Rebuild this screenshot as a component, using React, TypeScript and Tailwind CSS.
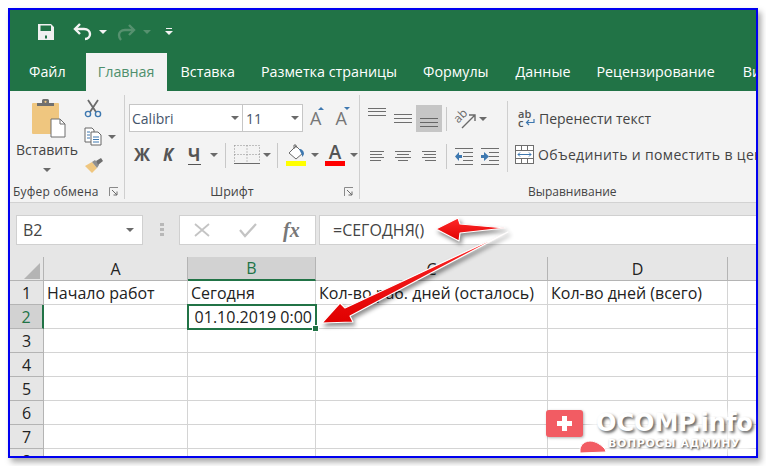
import React from 'react';

const font = { fontFamily: '"Open Sans", "Noto Sans", sans-serif' };

function Caret({ light, className = '' }: { light?: boolean; className?: string }) {
  return (
    <span
      className={`inline-block w-0 h-0 shrink-0 border-x-[4px] border-x-transparent border-t-[4px] ${
        light ? 'border-t-[#f3f3f3]' : 'border-t-[#6a6a6a]'
      } ${className}`}
    />
  );
}

function Launcher() {
  return (
    <svg width="10" height="10" viewBox="0 0 10 10" className="shrink-0">
      <path d="M0.5 9V0.5H9" fill="none" stroke="#8a8a8a" />
      <path d="M3 3l5 5M8 4.5V8H4.5" fill="none" stroke="#6a6a6a" />
    </svg>
  );
}

// horizontal text lines used by the alignment buttons
function Lines({ rows, color = '#6e6e6e' }: { rows: [number, number, number][]; color?: string }) {
  return (
    <svg width="26" height="27" viewBox="0 0 26 27" className="shrink-0">
      {rows.map(([x1, x2, y], i) => (
        <path key={i} d={`M${x1} ${y + 0.5}H${x2}`} stroke={color} />
      ))}
    </svg>
  );
}

function Divider({ h = 'h-[24px]' }: { h?: string }) {
  return <div className={`w-px bg-[#c8c8c8] shrink-0 ${h}`} />;
}

function Tab({ children, className = '' }: { children: React.ReactNode; className?: string }) {
  return <div className={`shrink-0 whitespace-nowrap text-white ${className}`}>{children}</div>;
}

function PasteIcon() {
  return (
    <svg width="36" height="40" viewBox="0 0 36 40" className="ml-[4px]">
      <rect x="1" y="5" width="27" height="31" rx="1" fill="#efc67f" />
      <path d="M6 5h5V2.5a1.5 1.5 0 0 1 1.5-1.5h4A1.5 1.5 0 0 1 18 2.5V5h5v3H6z" fill="#6f6f6f" />
      <circle cx="14.5" cy="3.8" r="1.1" fill="#efc67f" />
      <path d="M20 21h9l5 5v13H20z" fill="#fff" stroke="#6f6f6f" />
      <path d="M29 21v5h5" fill="none" stroke="#6f6f6f" />
    </svg>
  );
}

function ScissorsIcon() {
  return (
    <svg width="18" height="19" viewBox="0 0 18 19">
      <path d="M4 1l8 12M14 1L6 13" stroke="#6a6a6a" strokeWidth="1.8" fill="none" />
      <circle cx="4" cy="15" r="2.6" fill="none" stroke="#3e78b0" strokeWidth="1.4" />
      <circle cx="14" cy="15" r="2.6" fill="none" stroke="#3e78b0" strokeWidth="1.4" />
    </svg>
  );
}

function CopyIcon() {
  return (
    <svg width="18" height="19" viewBox="0 0 18 19">
      <path d="M1 1h7l2 2v12H1z" fill="#fff" stroke="#666" />
      <path d="M7 5h7l3 3v10H7z" fill="#fff" stroke="#666" />
      <path d="M3 5h3M3 8h3M3 11h3M9 10h6M9 12.5h6M9 15h6" stroke="#3e78b0" />
    </svg>
  );
}

function BrushIcon() {
  return (
    <svg width="20" height="17" viewBox="0 0 20 17">
      <path d="M1 9l7-4 5 6-5 5z" fill="#efc67f" />
      <path d="M8 5l3-2 4 5-2 3z" fill="#8f8f8f" />
      <path d="M12 4l5-3 2 3-5 4z" fill="#6f6f6f" />
    </svg>
  );
}

function BordersIcon() {
  return (
    <svg width="26" height="20" viewBox="0 0 26 20">
      <path
        d="M0.500 0.500H25.500V17.500M0.500 0.500V17.500M0.500 9.500H25.500M13 0.500V17.500"
        stroke="#8a8a8a"
        strokeDasharray="1 2"
        fill="none"
      />
      <path d="M0 18.500H26" stroke="#6a6a6a" />
    </svg>
  );
}

function FillIcon() {
  return (
    <svg width="20" height="22" viewBox="0 0 20 22">
      <path d="M10 2l7 7-7 6-7-6z" fill="#fff" stroke="#6a6a6a" />
      <path d="M8 5V1h2v3" fill="none" stroke="#6a6a6a" />
      <path d="M13 5c3 0 5 2 5 5l-1.500 3-1-3z" fill="#3e78b0" />
      <rect x="0" y="17" width="20" height="5" fill="#ffff00" />
    </svg>
  );
}

function OrientIcon() {
  return (
    <svg width="24" height="24" viewBox="0 0 24 24">
      <path d="M8 21L21 8M15 8h6v6" fill="none" stroke="#6a6a6a" strokeWidth="1.4" />
      <text
        x="1"
        y="13"
        fontSize="12"
        fill="#6a6a6a"
        fontFamily="Open Sans"
        transform="rotate(-45 7 11)"
      >
        ab
      </text>
    </svg>
  );
}

function IndentIcon({ flip }: { flip?: boolean }) {
  return (
    <svg width="18" height="17" viewBox="0 0 18 17">
      <path d="M0 0.500H18M0 16.500H18M8 4.500H18M8 8.500H18M8 12.500H18" stroke="#6e6e6e" />
      {flip ? (
        <path d="M0 7h3V4l5 4.500L3 13v-3H0z" fill="#3e78b0" />
      ) : (
        <path d="M7 7H4V4L0 8.500 4 13v-3h3z" fill="#3e78b0" />
      )}
    </svg>
  );
}

function WrapIcon() {
  return (
    <span className="relative w-[17px] h-[18px] shrink-0 text-[11px] leading-[9px] text-[#555] font-semibold">
      <span className="block">ab</span>
      <span className="block">c</span>
      <svg width="10" height="8" viewBox="0 0 10 8" className="absolute right-0 bottom-0">
        <path d="M9 0v3.500H2M4 1L1.500 3.500 4 6" fill="none" stroke="#3e78b0" strokeWidth="1.200" />
      </svg>
    </span>
  );
}

function MergeIcon() {
  return (
    <svg width="19" height="19" viewBox="0 0 19 19" className="shrink-0">
      <rect x="0.500" y="0.500" width="18" height="18" fill="#fff" stroke="#6e6e6e" />
      <path d="M0 5.500H19M0 13.500H19M6.500 0V5M12.500 0V5M6.500 14V19M12.500 14V19" stroke="#6e6e6e" />
      <path d="M3 9.500H16M5 7.500l-2 2 2 2M14 7.500l2 2-2 2" fill="none" stroke="#3e78b0" />
    </svg>
  );
}

const rowLabels = ['1', '2', '3', '4', '5', '6', '7', '8'];

export default function App() {
  return (
    <div className="relative w-[766px] h-[466px] bg-white overflow-hidden pl-2 pt-2" style={font}>
      <div className="w-[750px] h-[450px] border-2 border-[#0000f0] overflow-hidden bg-white shadow-[3px_4px_6px_rgba(0,0,0,0.35)]">
        {/* title bar */}
        <div className="h-[43px] bg-[#217346] flex items-center pl-[28px]">
          <svg width="16" height="16" viewBox="0 0 16 16">
            <path
              d="M0 0h13l3 3v13H0zM2.500 1.500v5.500h10.500V1.500zM7 11.500v3h2v-3z"
              fill="#f0f0f0"
              fillRule="evenodd"
            />
          </svg>
          <svg width="20" height="18" viewBox="0 0 20 18" className="ml-[19px]">
            <path d="M7 1L2 6l5 5" fill="none" stroke="#f4f4f4" strokeWidth="2.400" />
            <path d="M2 6h9c4 0 6 2.500 6 5s-2 5-5 5" fill="none" stroke="#f4f4f4" strokeWidth="2.400" />
          </svg>
          <Caret light className="ml-[6px]" />
          <svg width="20" height="18" viewBox="0 0 20 18" className="ml-[9px]">
            <path d="M13 2l5 5-5 5" fill="none" stroke="#56916f" strokeWidth="2.400" />
            <path d="M18 7H9c-4 0-6 2.500-6 5s1 4 2 5" fill="none" stroke="#56916f" strokeWidth="2.400" />
          </svg>
          <span className="ml-[7px] w-0 h-0 border-x-[4px] border-x-transparent border-t-[4px] border-t-[#56916f]" />
          <span className="ml-[14px] flex flex-col items-center gap-[2px]">
            <span className="w-[6px] h-px bg-[#f4f4f4]" />
            <Caret light />
          </span>
        </div>

        {/* tabs */}
        <div className="h-[38px] bg-[#217346] flex items-end text-[14.300px] leading-[38px] overflow-hidden">
          <Tab className="ml-[19px]">Файл</Tab>
          <div className="shrink-0 ml-[20px] w-[81px] h-[38px] bg-[#f3f3f3] text-center text-[#4e8f6c]">Главная</div>
          <Tab className="ml-[14px]">Вставка</Tab>
          <Tab className="ml-[26px]">Разметка страницы</Tab>
          <Tab className="ml-[26px]">Формулы</Tab>
          <Tab className="ml-[27px]">Данные</Tab>
          <Tab className="ml-[26px]">Рецензирование</Tab>
          <Tab className="ml-[28px]">Вид</Tab>
        </div>

        {/* ribbon */}
        <div className="h-[112px] bg-[#f3f3f3] border-b border-[#d2d2d2] flex text-[#444] text-[12px]">
          {/* clipboard */}
          <div className="w-[114px] shrink-0 flex flex-col">
            <div className="h-[91px] flex">
              <div className="w-[74px] pl-[6px] flex flex-col">
                <div className="w-[62px] pt-[7px] flex flex-col items-center">
                  <PasteIcon />
                  <div className="mt-[2px] text-[14px] leading-[20px] text-[#444]">Вставить</div>
                  <Caret className="mt-[8px]" />
                </div>
              </div>
              <div className="pt-[8px] flex flex-col">
                <ScissorsIcon />
                <div className="mt-[9px] flex items-center gap-[6px]">
                  <CopyIcon />
                  <Caret />
                </div>
                <div className="mt-[11px]">
                  <BrushIcon />
                </div>
              </div>
            </div>
            <div className="flex-1 pl-[3px] pr-[5px] flex items-center justify-between">
              <span className="text-[#444] tracking-[0.2px]">Буфер обмена</span>
              <Launcher />
            </div>
          </div>
          <div className="w-px h-[104px] mt-[4px] bg-[#cfcfcf] shrink-0" />

          {/* font */}
          <div className="w-[234px] shrink-0 flex flex-col">
            <div className="h-[91px] pl-[4px] flex flex-col">
              <div className="mt-[13px] flex items-center">
                <div className="w-[114px] h-[28px] bg-white border border-[#c6c6c6] flex items-center justify-between pl-[2px] pr-[3px]">
                  <span className="text-[14px] text-[#44546a]">Calibri</span>
                  <Caret />
                </div>
                <div className="w-[60px] h-[28px] bg-white border border-l-0 border-[#c6c6c6] flex items-center justify-between pl-[3px] pr-[3px]">
                  <span className="text-[14px] text-[#44546a]">11</span>
                  <Caret />
                </div>
                <div className="ml-[7px] relative text-[18px] leading-[20px] font-medium text-[#777]">
                  A
                  <span className="absolute right-[-3px] top-[-1px] w-0 h-0 border-x-[3px] border-x-transparent border-b-[3px] border-b-[#3e78b0]" />
                </div>
                <div className="ml-[14px] relative text-[18px] leading-[20px] font-medium text-[#777]">
                  A
                  <span className="absolute right-[-3px] top-[-1px] w-0 h-0 border-x-[3px] border-x-transparent border-t-[3px] border-t-[#3e78b0]" />
                </div>
              </div>
              <div className="mt-[10px] h-[26px] flex items-center">
                <span className="ml-[5px] w-[16px] text-[17px] font-bold text-[#555]">Ж</span>
                <span className="ml-[13px] w-[11px] text-[17px] font-bold italic text-[#555]">К</span>
                <span className="ml-[14px] w-[13px] text-[17px] leading-[19px] font-bold text-[#555] border-b border-[#555]">Ч</span>
                <Caret className="ml-[9px]" />
                <Divider h="h-[25px] ml-[7px]" />
                <span className="ml-[8px]">
                  <BordersIcon />
                </span>
                <Caret className="ml-[3px]" />
                <Divider h="h-[25px] ml-[6px]" />
                <span className="ml-[8px]">
                  <FillIcon />
                </span>
                <Caret className="ml-[5px]" />
                <span className="ml-[6px] w-[20px] flex flex-col items-center">
                  <span className="text-[19px] leading-[17px] font-semibold text-[#555]">A</span>
                  <span className="w-[20px] h-[5px] bg-[#ff0000]" />
                </span>
                <Caret className="ml-[5px]" />
              </div>
            </div>
            <div className="flex-1 relative flex items-center justify-center pr-[20px]">
              <span className="text-[#444] text-[12.500px]">Шрифт</span>
              <span className="absolute right-[5px] top-[5px]">
                <Launcher />
              </span>
            </div>
          </div>
          <div className="w-px h-[104px] mt-[4px] bg-[#cfcfcf] shrink-0" />

          {/* alignment */}
          <div className="flex-1 min-w-0 flex flex-col">
            <div className="h-[91px] flex">
              <div className="w-[147px] shrink-0 pl-[4px] pt-[14px]">
                <div className="h-[27px] flex items-center">
                  <Lines rows={[[4, 22, 3], [4, 22, 6], [4, 22, 10]]} />
                  <Lines rows={[[4, 22, 9], [4, 22, 13], [4, 22, 17]]} />
                  <div className="w-[26px] h-[27px] bg-[#c6c6c6]">
                    <Lines rows={[[4, 22, 13], [4, 22, 17], [4, 22, 21]]} color="#666" />
                  </div>
                  <Divider h="h-[24px] ml-[4px]" />
                  <span className="ml-[7px]">
                    <OrientIcon />
                  </span>
                  <Caret className="ml-[1px]" />
                </div>
                <div className="mt-[11px] h-[27px] flex items-center">
                  <Lines rows={[[6, 20, 8], [6, 18, 11], [6, 20, 14], [6, 17, 17]]} />
                  <Lines rows={[[5, 21, 8], [7, 19, 11], [5, 21, 14], [8, 18, 17]]} />
                  <Lines rows={[[6, 20, 8], [8, 20, 11], [6, 20, 14], [9, 20, 17]]} />
                  <Divider h="h-[25px] ml-[4px]" />
                  <span className="ml-[8px]">
                    <IndentIcon />
                  </span>
                  <span className="ml-[8px]">
                    <IndentIcon flip />
                  </span>
                </div>
              </div>
              <div className="w-px h-[71px] mt-[10px] bg-[#cfcfcf] shrink-0" />
              <div className="flex-1 min-w-0 pl-[7px] overflow-hidden">
                <div className="mt-[16px] h-[22px] ml-[3px] flex items-center gap-[4px] whitespace-nowrap text-[14px] text-[#444]">
                  <WrapIcon />
                  Перенести текст
                </div>
                <div className="mt-[15px] h-[20px] flex items-center gap-[4px] whitespace-nowrap text-[14px] tracking-[0.35px] text-[#444]">
                  <MergeIcon />
                  Объединить и поместить в центре
                </div>
              </div>
            </div>
            <div className="flex-1 pl-[168px] flex items-center text-[12px] text-[#444]">Выравнивание</div>
          </div>
        </div>

        {/* formula bar */}
        <div className="h-[54px] bg-[#e6e6e6] pt-[12px] flex items-start">
          <div className="ml-[6px] w-[127px] h-[30px] bg-white border border-[#d0d0d0] flex items-center justify-between pl-[6px] pr-[8px] text-[16px] text-[#444]">
            B2
            <Caret />
          </div>
          <div className="ml-[17px] w-[4px] h-[14px] mt-[8px] flex flex-col gap-[2px]">
            <span className="h-[3px] bg-[#b8b8b8]" />
            <span className="h-[3px] bg-[#b8b8b8]" />
            <span className="h-[3px] bg-[#b8b8b8]" />
          </div>
          <div className="ml-[15px] w-[137px] h-[30px] bg-white border border-[#d0d0d0] flex items-center pl-[14px] gap-[16px]">
            <svg width="16" height="14" viewBox="0 0 16 14">
              <path d="M1 1l14 12M15 1L1 13" stroke="#c4c4c4" strokeWidth="1.800" />
            </svg>
            <svg width="18" height="16" viewBox="0 0 18 16" className="ml-[13px]">
              <path d="M1 8l5 6L17 2" fill="none" stroke="#c4c4c4" strokeWidth="2.200" />
            </svg>
            <span
              className="ml-[10px] text-[20px] italic font-bold text-[#777]"
              style={{ fontFamily: '"Liberation Serif", serif' }}
            >
              fx
            </span>
          </div>
          <div className="ml-[3px] flex-1 h-[30px] bg-white border-y border-l border-[#d0d0d0] flex items-center pl-[13px] text-[16px] text-[#444]">
            =СЕГОДНЯ()
          </div>
        </div>

        {/* sheet */}
        <div className="grid grid-cols-[34px_144px_128px_232px_180px_28px] grid-rows-[24px_repeat(8,24px)] text-[16px] text-[#222]">
          <div className="bg-[#e6e6e6] border-r border-b border-[#b4b4b4] flex items-end justify-end pr-[3px] pb-[1px]">
            <svg width="16" height="16" viewBox="0 0 16 16">
              <path d="M16 0v16H0z" fill="#b4b4b4" />
            </svg>
          </div>
          <div className="bg-[#e6e6e6] border-b border-r border-[#b4b4b4] flex items-center justify-center">A</div>
          <div className="bg-[#d2d2d2] border-b-2 border-r border-b-[#217346] border-r-[#b4b4b4] flex items-center justify-center text-[#217346]">
            B
          </div>
          <div className="bg-[#e6e6e6] border-b border-r border-[#b4b4b4] flex items-center justify-center">C</div>
          <div className="bg-[#e6e6e6] border-b border-r border-[#b4b4b4] flex items-center justify-center">D</div>
          <div className="bg-[#e6e6e6] border-b border-[#b4b4b4]" />

          {rowLabels.map((label, i) => {
            const selected = i === 1;
            const cell = 'border-r border-b border-[#d4d4d4] flex items-center whitespace-nowrap overflow-hidden';
            return (
              <React.Fragment key={label}>
                <div
                  className={
                    selected
                      ? 'bg-[#d2d2d2] border-r-2 border-r-[#217346] border-b border-b-[#b4b4b4] flex items-center justify-center text-[#217346]'
                      : 'bg-[#e6e6e6] border-r border-b border-[#b4b4b4] flex items-center justify-center'
                  }
                >
                  {label}
                </div>
                <div className={`${cell} pl-[3px]`}>{i === 0 ? 'Начало работ' : ''}</div>
                {selected ? (
                  <div className="relative bg-white outline-2 -outline-offset-1 outline-[#217346] flex items-center justify-end pr-[4px] whitespace-nowrap">
                    01.10.2019 0:00
                    <span className="absolute right-[-3px] bottom-[-3px] w-[5px] h-[5px] bg-[#217346] border border-white box-content" />
                  </div>
                ) : (
                  <div className={`${cell} pl-[3px]`}>{i === 0 ? 'Сегодня' : ''}</div>
                )}
                <div className={`${cell} pl-[3px]`}>{i === 0 ? 'Кол-во раб. дней (осталось)' : ''}</div>
                <div className={`${cell} pl-[3px]`}>{i === 0 ? 'Кол-во дней (всего)' : ''}</div>
                <div className="border-b border-[#d4d4d4]" />
              </React.Fragment>
            );
          })}
        </div>
      </div>

      {/* red annotation arrows */}
      <svg
        width="766"
        height="466"
        viewBox="0 0 766 466"
        className="absolute left-0 top-0 pointer-events-none drop-shadow-[2px_3px_2px_rgba(0,0,0,0.45)]"
      >
        <defs>
          <linearGradient id="arrowRed" x1="0" y1="0" x2="0" y2="1">
            <stop offset="0" stopColor="#ff2a2a" />
            <stop offset="1" stopColor="#e00000" />
          </linearGradient>
        </defs>
        <path
          d="M436 229L458 218L460 224L505 228L460 233L459 241Z"
          fill="url(#arrowRed)"
          stroke="#fff"
          strokeWidth="1.200"
          strokeLinejoin="round"
        />
        <path
          d="M322 323L340 303L345 308L508 232L350 316L353 322Z"
          fill="url(#arrowRed)"
          stroke="#fff"
          strokeWidth="1.200"
          strokeLinejoin="round"
        />
      </svg>

      {/* watermark */}
      <div className="absolute left-[546px] top-[410px] w-[208px] h-[44px]">
        <div className="absolute left-[44px] top-[2px] w-[162px] h-[40px] bg-white/70 blur-[3px]" />
        <div className="absolute left-0 top-0 w-[37px] h-[27px] rounded-[3px] bg-[#f25c63] flex items-center justify-center shadow-[1px_1px_3px_rgba(0,0,0,0.3)]">
          <svg width="15" height="15" viewBox="0 0 15 15">
            <path d="M5 0h5v5h5v5h-5v5H5v-5H0V5h5z" fill="#fff" />
          </svg>
        </div>
        <svg width="56" height="20" viewBox="0 0 56 20" className="absolute left-[6px] top-[26px]">
          <path d="M3 5c4 6 16 8 26 4" fill="none" stroke="#fff" strokeWidth="1.500" />
          <path d="M28 13c2-9 14-12 25 0l1 3-26 1z" fill="#f25c63" stroke="#fff" />
        </svg>
        <span
          className="absolute left-[50px] top-[-1px] whitespace-nowrap text-[24px] leading-[28px] font-bold text-white [text-shadow:2px_2px_3px_rgba(60,60,60,0.8)]"
          style={{ fontFamily: '"DejaVu Sans", sans-serif' }}
        >
          OCOMP.info
        </span>
        <span
          className="absolute left-[62px] top-[26px] whitespace-nowrap text-[11px] leading-[16px] font-bold text-white tracking-[0.6px] [text-shadow:1px_1px_2px_rgba(40,40,40,0.9)]"
          style={{ fontFamily: '"DejaVu Sans", sans-serif' }}
        >
          ВОПРОСЫ АДМИНУ
        </span>
      </div>
    </div>
  );
}
